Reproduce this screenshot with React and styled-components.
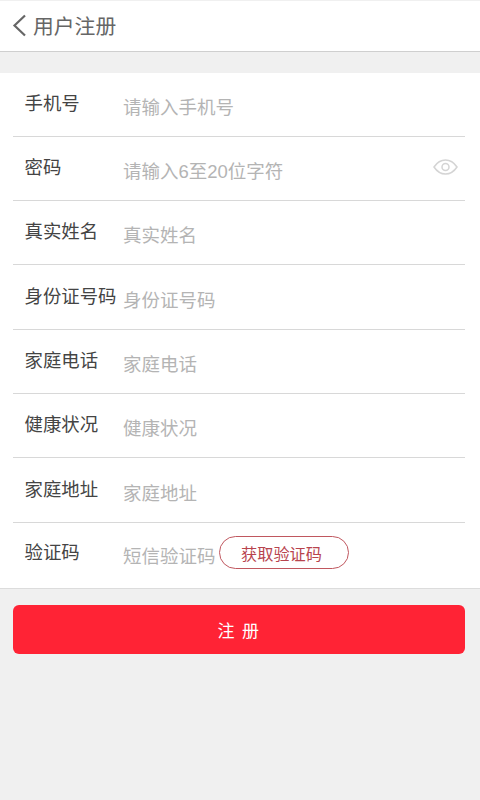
import React from 'react';
import styled, { createGlobalStyle } from 'styled-components';

const GlobalStyle = createGlobalStyle`
  html, body { margin: 0; padding: 0; background: #f0f0f0; }
  * { box-sizing: border-box; }
  input::placeholder { color: #b4b4b4; opacity: 1; }
`;

const Page = styled.div`
  width: 480px;
  height: 800px;
  overflow: hidden;
  background: #f0f0f0;
  font-family: "Liberation Sans", "Noto Sans CJK SC", sans-serif;
`;

const Header = styled.header`
  height: 51px;
  margin-top: 1px;
  padding: 0 0 2px 12px;
  display: flex;
  align-items: center;
  gap: 5px;
  background: #fff;
  border-bottom: 1px solid #cfcfcf;
`;

const BackIcon = styled.svg`
  width: 16px;
  height: 24px;
  fill: none;
  stroke: #666;
  stroke-width: 2.2;
`;

const Title = styled.h1`
  margin: 0;
  font-size: 20.8px;
  font-weight: 400;
  color: #666;
`;

const Form = styled.form`
  margin-top: 20.6px;
  padding: 0 15px 0 13px;
  background: #fff;
  border-bottom: 1px solid #dcdcdc;
`;

const Row = styled.div`
  height: ${({ $last }) => ($last ? '65px' : '64.3px')};
  padding-bottom: ${({ $last }) => ($last ? '3px' : '0')};
  display: flex;
  align-items: center;
  border-bottom: ${({ $last }) => ($last ? 'none' : '1px solid #d8d8d8')};
`;

const Label = styled.label`
  width: 110px;
  flex: none;
  padding: 0 0 5px 11.5px;
  font-size: 18.4px;
  white-space: nowrap;
  color: #444;
`;

const Field = styled.input`
  width: ${({ $short }) => ($short ? '96px' : '280px')};
  flex: ${({ $short }) => ($short ? 'none' : '1')};
  min-width: 0;
  padding: 0;
  margin-top: 7px;
  border: 0;
  outline: 0;
  background: transparent;
  font: inherit;
  font-size: 18.5px;
  color: #444;
`;

const EyeIcon = styled.svg`
  width: 25px;
  height: 18px;
  margin-right: 7px;
  margin-bottom: 3px;
  fill: none;
  stroke: #d4d4d4;
  stroke-width: 1.5;
`;

const CodeButton = styled.button`
  width: 130px;
  height: 33px;
  padding: 0 5px 0 0;
  margin-bottom: 2px;
  border: 1px solid #c0575f;
  border-radius: 17px;
  background: #fff;
  font: inherit;
  font-size: 16.2px;
  color: #b8444e;
`;

const Submit = styled.button`
  display: block;
  width: 452px;
  height: 49px;
  margin: 16px 0 0 13px;
  padding: 0;
  border: 0;
  border-radius: 6px;
  background: #ff2335;
  font: inherit;
  font-size: 17px;
  letter-spacing: 1.5px;
  color: #fff;
`;

const fields = [
  { label: '手机号', placeholder: '请输入手机号' },
  { label: '密码', placeholder: '请输入6至20位字符', eye: true },
  { label: '真实姓名', placeholder: '真实姓名' },
  { label: '身份证号码', placeholder: '身份证号码' },
  { label: '家庭电话', placeholder: '家庭电话' },
  { label: '健康状况', placeholder: '健康状况' },
  { label: '家庭地址', placeholder: '家庭地址' },
];

export default function App() {
  return (
    <Page>
      <GlobalStyle />
      <Header>
        <BackIcon viewBox="0 0 16 24">
          <path d="M13 2.5 2.5 12.5 13 22.5" />
        </BackIcon>
        <Title>用户注册</Title>
      </Header>
      <Form onSubmit={(e) => e.preventDefault()}>
        {fields.map((f) => (
          <Row key={f.label}>
            <Label>{f.label}</Label>
            <Field placeholder={f.placeholder} />
            {f.eye && (
              <EyeIcon viewBox="0 0 25 18">
                <path d="M1 9C4 4.5 8 2 12.500 2S21 4.500 24 9C21 13.500 17 16 12.500 16S4 13.500 1 9Z" />
                <circle cx="12.500" cy="9" r="3.500" />
              </EyeIcon>
            )}
          </Row>
        ))}
        <Row $last>
          <Label>验证码</Label>
          <Field $short placeholder="短信验证码" />
          <CodeButton type="button">获取验证码</CodeButton>
        </Row>
      </Form>
      <Submit type="button">注 册</Submit>
    </Page>
  );
}
